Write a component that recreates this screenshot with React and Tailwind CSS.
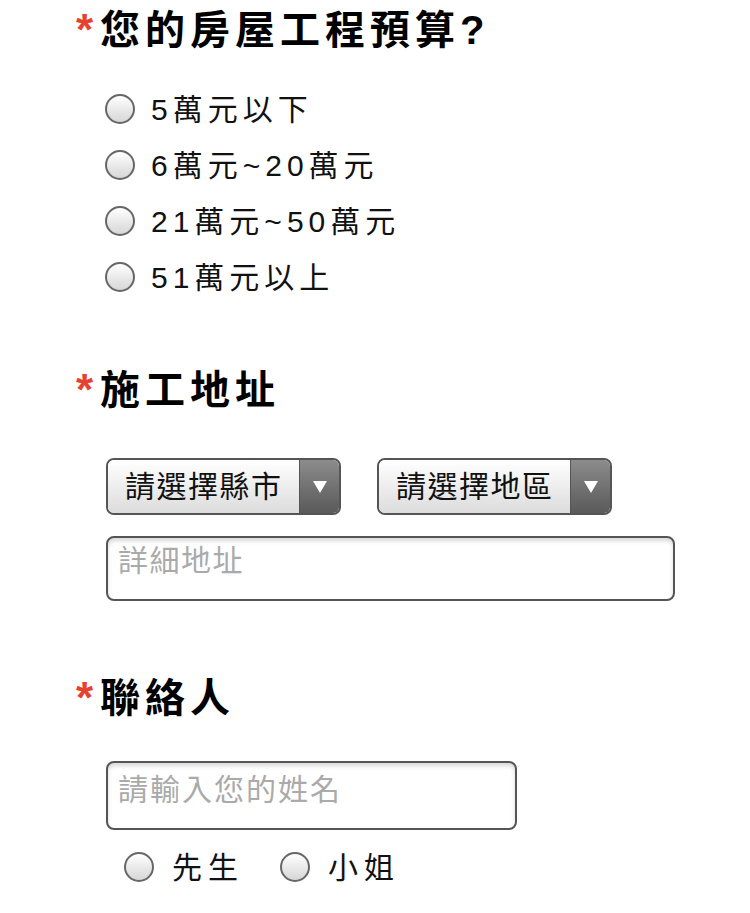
import React from 'react';

const font = { fontFamily: '"Liberation Sans", "Noto Sans CJK TC", sans-serif' };

const Radio = () => (
  <span className="inline-block w-[30px] h-[30px] shrink-0 rounded-full border-2 border-[#666] bg-gradient-to-b from-white to-[#d6d6d6]" />
);

const Heading = ({ children }) => (
  <h2 className="flex items-center h-[60px] text-[40px] leading-[60px] font-bold tracking-[5px] text-black">
    <span className="self-start text-[44px] text-[#e8402f] w-[24px] tracking-normal">*</span>
    {children}
  </h2>
);

const Option = ({ label }) => (
  <label className="flex items-center h-[56px] gap-[16px]">
    <Radio />
    <span className="text-[30px] tracking-[5px] text-[#111]">{label}</span>
  </label>
);

const Select = ({ label }) => (
  <div className="flex w-[235px] h-[57px] rounded-[8px] border-2 border-[#555] overflow-hidden">
    <div className="flex-1 flex items-center pl-[17px] bg-gradient-to-b from-white to-[#dcdcdc] text-[30px] tracking-[1.5px] text-[#111]">
      {label}
    </div>
    <div className="w-[40px] flex items-center justify-center bg-gradient-to-b from-[#8c8c8c] to-[#5a5a5a] border-l border-[#555]">
      <svg width="14" height="12" viewBox="0 0 14 12">
        <path d="M0 0 L14 0 L7 12 Z" fill="#fff" />
      </svg>
    </div>
  </div>
);

export default function App() {
  const options = ['5萬元以下', '6萬元~20萬元', '21萬元~50萬元', '51萬元以上'];
  return (
    <div className="w-[750px] min-h-[913px] bg-white pl-[76px]" style={font}>
      <Heading>您的房屋工程預算?</Heading>
      <div className="mt-[21px] pl-[29px]">
        {options.map((o) => (
          <Option key={o} label={o} />
        ))}
      </div>

      <div className="mt-[55px]">
        <Heading>施工地址</Heading>
      </div>
      <div className="pl-[30px] mt-[38px] flex gap-[36px]">
        <Select label="請選擇縣市" />
        <Select label="請選擇地區" />
      </div>
      <div className="pl-[30px] mt-[21px]">
        <input
          className="w-[569px] h-[65px] rounded-[8px] border-2 border-[#555] px-[10px] pt-[2px] pb-[18px] text-[30px] tracking-[1.5px] shadow-[inset_0_3px_4px_rgba(0,0,0,0.15)] placeholder:text-[#aaa] outline-none"
          placeholder="詳細地址"
        />
      </div>

      <div className="mt-[67px]">
        <Heading>聯絡人</Heading>
      </div>
      <div className="pl-[30px] mt-[33px]">
        <input
          className="w-[411px] h-[69px] rounded-[8px] border-2 border-[#555] px-[10px] pt-[2px] pb-[14px] text-[30px] tracking-[2px] shadow-[inset_0_3px_4px_rgba(0,0,0,0.15)] placeholder:text-[#aaa] outline-none"
          placeholder="請輸入您的姓名"
        />
      </div>
      <div className="pl-[48px] mt-[12px] flex items-center h-[50px] gap-[36px]">
        <label className="flex items-center gap-[18px]">
          <Radio />
          <span className="text-[30px] tracking-[6px] text-[#111]">先生</span>
        </label>
        <label className="flex items-center gap-[18px]">
          <Radio />
          <span className="text-[30px] tracking-[6px] text-[#111]">小姐</span>
        </label>
      </div>
    </div>
  );
}
